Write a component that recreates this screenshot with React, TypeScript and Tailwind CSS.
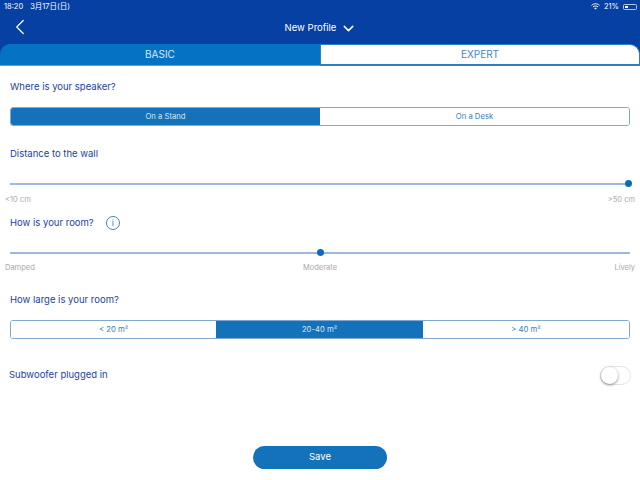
import { ChevronDown, ChevronLeft } from "lucide-react";

const font = { fontFamily: "Inter, 'Noto Sans CJK JP', sans-serif" };

function Segment({ items, active }: { items: { label: string; w: string }[]; active: number }) {
  return (
    <div className="mx-[10px] flex h-[19px] overflow-hidden rounded-[3px] border border-[#7fa9d4]">
      {items.map((it, i) => (
        <div
          key={it.label}
          className={`${it.w} flex items-center justify-center text-[7.7px] ${i === active ? "bg-[#1472ba] text-[#d5e6f4]" : "bg-white text-[#2f7fc0]"}`}
        >
          {it.label}
        </div>
      ))}
    </div>
  );
}

function Slider({ pos }: { pos: string }) {
  return (
    <div className="relative mx-[10px] h-[2px] bg-[#9dbad9]">
      <div className={`absolute top-[-3px] h-[7px] w-[7px] rounded-full bg-[#1069b5] ${pos}`} />
    </div>
  );
}

export default function App() {
  return (
    <div style={font} className="flex h-[480px] w-[640px] flex-col overflow-hidden bg-white">
      <div className="h-[44px] bg-[#0640a3] text-white">
        <div className="flex h-[13px] items-center justify-between pl-[4px] pr-[3px] text-[7.5px] leading-none">
          <div className="flex gap-[7px]">
            <span>18:20</span>
            <span>3月17日(日)</span>
          </div>
          <div className="flex items-center gap-[4px]">
            <svg width="9" height="7" viewBox="0 0 9 7" fill="none" stroke="white" strokeWidth="1">
              <path d="M0.5 2.4C3 0.2 6 0.2 8.5 2.4" />
              <path d="M2 3.9C3.5 2.7 5.5 2.7 7 3.9" />
              <path d="M4.5 6.6L3.2 5.2C4 4.7 5 4.7 5.8 5.2Z" fill="white" stroke="none" />
            </svg>
            <span>21%</span>
            <div className="flex h-[6px] w-[14px] items-center rounded-[1.5px] border border-[#b8c8e6] p-[1px]">
              <div className="h-full w-[3px] bg-white" />
            </div>
          </div>
        </div>
        <div className="relative flex h-[31px] items-center justify-center gap-[4px] pb-[1px] text-[9.5px]">
          <ChevronLeft className="absolute left-[7px] top-[1px]" size={26} strokeWidth={1.1} />
          <span className="ml-[2px]">New Profile</span>
          <ChevronDown size={17} strokeWidth={2} />
        </div>
      </div>

      <div className="flex h-[22px] bg-[#0640a3] text-[10px]">
        <div className="flex w-[320px] items-center justify-center rounded-tl-[10px] border-b border-[#5a9fd8] bg-[#0672c3] text-[#d8e8f6]">
          BASIC
        </div>
        <div className="flex w-[320px] items-center justify-center rounded-tr-[10px] border border-b-2 border-[#2c7fc2] bg-white text-[#3f86c4]">
          EXPERT
        </div>
      </div>

      <div className="flex flex-1 flex-col text-[9.5px] text-[#1c3fa0]">
        <div className="ml-[10px] mt-[15px] h-[12px] leading-[12px]">Where is your speaker?</div>
        <div className="mt-[14px]">
          <Segment
            active={0}
            items={[
              { label: "On a Stand", w: "w-[309px]" },
              { label: "On a Desk", w: "flex-1" },
            ]}
          />
        </div>
        <div className="ml-[10px] mt-[22px] h-[12px] leading-[12px]">Distance to the wall</div>
        <div className="mt-[23px]">
          <Slider pos="right-[-2px]" />
        </div>
        <div className="mx-[5px] mt-[10px] flex h-[10px] justify-between text-[7.5px] leading-[10px] text-[#a9a9a9]">
          <span>&lt;10 cm</span>
          <span>&gt;50 cm</span>
        </div>
        <div className="ml-[10px] mt-[10px] flex h-[16px] items-center gap-[12px]">
          <span>How is your room?</span>
          <div className="flex h-[14px] w-[14px] items-center justify-center rounded-full border border-[#3f86c4] text-[9px] text-[#2f7fc0]">
            i
          </div>
        </div>
        <div className="mt-[21px]">
          <Slider pos="left-[307px]" />
        </div>
        <div className="mx-[5px] mt-[9px] grid h-[10px] grid-cols-3 text-[7.5px] leading-[10px] text-[#a9a9a9]">
          <span>Damped</span>
          <span className="text-center">Moderate</span>
          <span className="text-right">Lively</span>
        </div>
        <div className="ml-[10px] mt-[21px] h-[12px] leading-[12px]">How large is your room?</div>
        <div className="mt-[14px]">
          <Segment
            active={1}
            items={[
              { label: "< 20 m²", w: "w-[205px]" },
              { label: "20-40 m²", w: "w-[207px]" },
              { label: "> 40 m²", w: "flex-1" },
            ]}
          />
        </div>
        <div className="mt-[26px] flex h-[20px] items-center justify-between pl-[9px] pr-[9px]">
          <span>Subwoofer plugged in</span>
          <div className="h-[19px] w-[31px] rounded-full border border-[#e4e4e4] bg-white">
            <div className="h-[17px] w-[17px] rounded-full bg-white shadow-[0_1px_3px_rgba(0,0,0,0.45)]" />
          </div>
        </div>
        <div className="mt-[61px] flex justify-center">
          <div className="flex h-[23px] w-[134px] items-center justify-center rounded-full bg-[#1472ba] text-white">
            Save
          </div>
        </div>
      </div>
    </div>
  );
}
